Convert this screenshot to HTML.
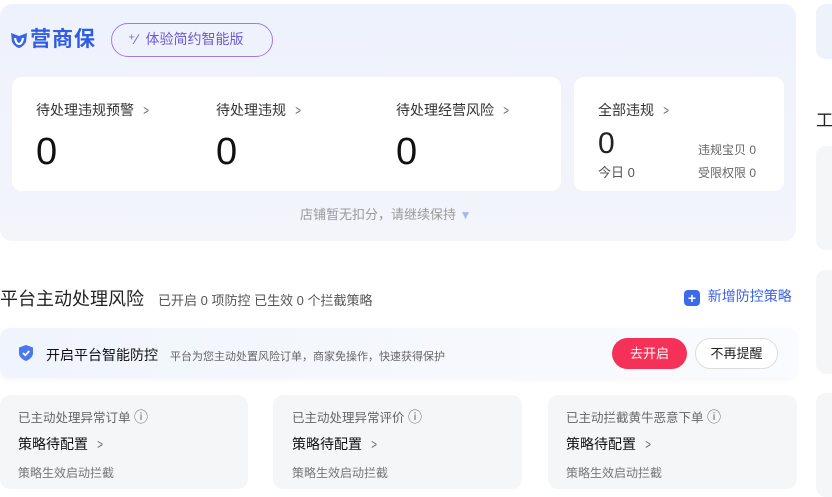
<!DOCTYPE html>
<html><head><meta charset="utf-8"><style>
*{margin:0;padding:0;box-sizing:border-box}
body{width:832px;height:491px;overflow:hidden;background:#fff;font-family:"Liberation Sans","Noto Sans CJK SC",sans-serif;color:#222;position:relative}
.a{position:absolute}
.panel{left:0;top:4px;width:796px;height:237px;border-radius:12px;background:linear-gradient(180deg,#eef2fc,#f3f5fb)}
.card{background:#fff;border-radius:10px}
.lbl{font-size:14px;color:#333}
.num{font-size:38px;color:#111;line-height:1}
.gray{background:#f5f6f8;border-radius:10px}
.chev{color:#666;margin-left:8px;display:inline-block;transform:scaleX(.7)}
</style></head><body>
<div class="a panel"></div>
<svg class="a" style="left:10px;top:31px" width="18" height="18" viewBox="0 0 18 18"><path d="M1 2 L9 5 L17 2 L16 11 Q13 16 9 17 Q5 16 2 11 Z" fill="#3a63e8"/><path d="M5 7 Q6 13 9 13 Q12 13 13 7" stroke="#fff" stroke-width="2.2" fill="none"/></svg>
<div class="a" style="left:30px;top:28px;font-size:21px;font-weight:bold;color:#2f5ce6;line-height:24px;letter-spacing:1px">营商保</div>
<div class="a" style="left:111px;top:23px;width:162px;height:34px;border:1.5px solid #a07be8;border-radius:17px;font-size:14px;color:#6b5bd6;line-height:31px;padding-left:16px">⁺∕&nbsp;&nbsp;体验简约智能版</div>
<div class="a card" style="left:12px;top:77px;width:549px;height:114px"></div>
<div class="a card" style="left:574px;top:77px;width:210px;height:114px"></div>
<div class="a lbl" style="left:36px;top:100px">待处理违规预警<span class="chev">&gt;</span></div>
<div class="a lbl" style="left:216px;top:100px">待处理违规<span class="chev">&gt;</span></div>
<div class="a lbl" style="left:396px;top:100px">待处理经营风险<span class="chev">&gt;</span></div>
<div class="a num" style="left:36px;top:133px">0</div>
<div class="a num" style="left:216px;top:133px">0</div>
<div class="a num" style="left:396px;top:133px">0</div>
<div class="a lbl" style="left:598px;top:100px">全部违规<span class="chev">&gt;</span></div>
<div class="a" style="left:598px;top:129px;font-size:30px;line-height:1">0</div>
<div class="a" style="left:598px;top:162px;font-size:13px;color:#555">今日 0</div>
<div class="a" style="left:698px;top:141px;font-size:12px;color:#666">违规宝贝 0</div>
<div class="a" style="left:698px;top:164px;font-size:12px;color:#666">受限权限 0</div>
<div class="a" style="left:300px;top:204px;font-size:13px;color:#999">店铺暂无扣分，请继续保持 <span style="color:#a8b8e0;font-size:12px">▼</span></div>
<div class="a" style="left:816px;top:4px;width:30px;height:55px;border-radius:10px;background:#eef2fb"></div>
<div class="a" style="left:816px;top:106px;font-size:17px">工</div>
<div class="a" style="left:816px;top:146px;width:30px;height:104px;border-radius:10px;background:#f5f6f8"></div>
<div class="a" style="left:816px;top:270px;width:30px;height:104px;border-radius:10px;background:#f5f6f8"></div>
<div class="a" style="left:816px;top:393px;width:30px;height:104px;border-radius:10px;background:#f5f6f8"></div>
<div class="a" style="left:0;top:285px;font-size:18px;color:#222">平台主动处理风险<span style="font-size:13px;color:#555;margin-left:14px">已开启 0 项防控 已生效 0 个拦截策略</span></div>
<div class="a" style="left:684px;top:286px;font-size:14px;color:#3c64e6"><span style="display:inline-block;width:16px;height:16px;background:#3c6ae8;border-radius:4px;color:#fff;text-align:center;line-height:16px;font-weight:bold;vertical-align:-2px;font-size:14px">+</span>&nbsp;&nbsp;新增防控策略</div>
<div class="a" style="left:0;top:328px;width:797px;height:50px;border-radius:10px;background:linear-gradient(90deg,#f0f4fd,#fafbfe);box-shadow:0 2px 6px rgba(0,0,0,.04)"></div>
<svg class="a" style="left:17px;top:344px" width="18" height="18" viewBox="0 0 18 18"><path d="M9 1 L16 3.5 V9 Q16 14 9 17 Q2 14 2 9 V3.5 Z" fill="#4a78ee"/><path d="M6 9 L8.3 11.2 L12.3 7" stroke="#fff" stroke-width="1.8" fill="none"/></svg>
<div class="a" style="left:46px;top:345px;font-size:14px;color:#111">开启平台智能防控<span style="font-size:11px;color:#666;margin-left:12px">平台为您主动处置风险订单，商家免操作，快速获得保护</span></div>
<div class="a" style="left:612px;top:338px;width:75px;height:31px;border-radius:16px;background:#f53158;color:#fff;font-size:13px;text-align:center;line-height:31px">去开启</div>
<div class="a" style="left:695px;top:338px;width:83px;height:31px;border-radius:16px;border:1px solid #ddd;background:#fff;color:#222;font-size:13px;text-align:center;line-height:29px">不再提醒</div>
<div class="a gray" style="left:0;top:395px;width:248px;height:94px"></div>
<div class="a gray" style="left:273px;top:395px;width:249px;height:94px"></div>
<div class="a gray" style="left:548px;top:395px;width:249px;height:94px"></div>
<div class="a" style="left:18px;top:407px;font-size:12.5px;color:#666">已主动处理异常订单 <span style="font-size:14px">ⓘ</span></div>
<div class="a" style="left:292px;top:407px;font-size:12.5px;color:#666">已主动处理异常评价 <span style="font-size:14px">ⓘ</span></div>
<div class="a" style="left:566px;top:407px;font-size:12.5px;color:#666">已主动拦截黄牛恶意下单 <span style="font-size:14px">ⓘ</span></div>
<div class="a" style="left:18px;top:434px;font-size:14px;color:#111">策略待配置<span class="chev">&gt;</span></div>
<div class="a" style="left:292px;top:434px;font-size:14px;color:#111">策略待配置<span class="chev">&gt;</span></div>
<div class="a" style="left:566px;top:434px;font-size:14px;color:#111">策略待配置<span class="chev">&gt;</span></div>
<div class="a" style="left:18px;top:464px;font-size:12px;color:#777">策略生效启动拦截</div>
<div class="a" style="left:292px;top:464px;font-size:12px;color:#777">策略生效启动拦截</div>
<div class="a" style="left:566px;top:464px;font-size:12px;color:#777">策略生效启动拦截</div>
</body></html>
